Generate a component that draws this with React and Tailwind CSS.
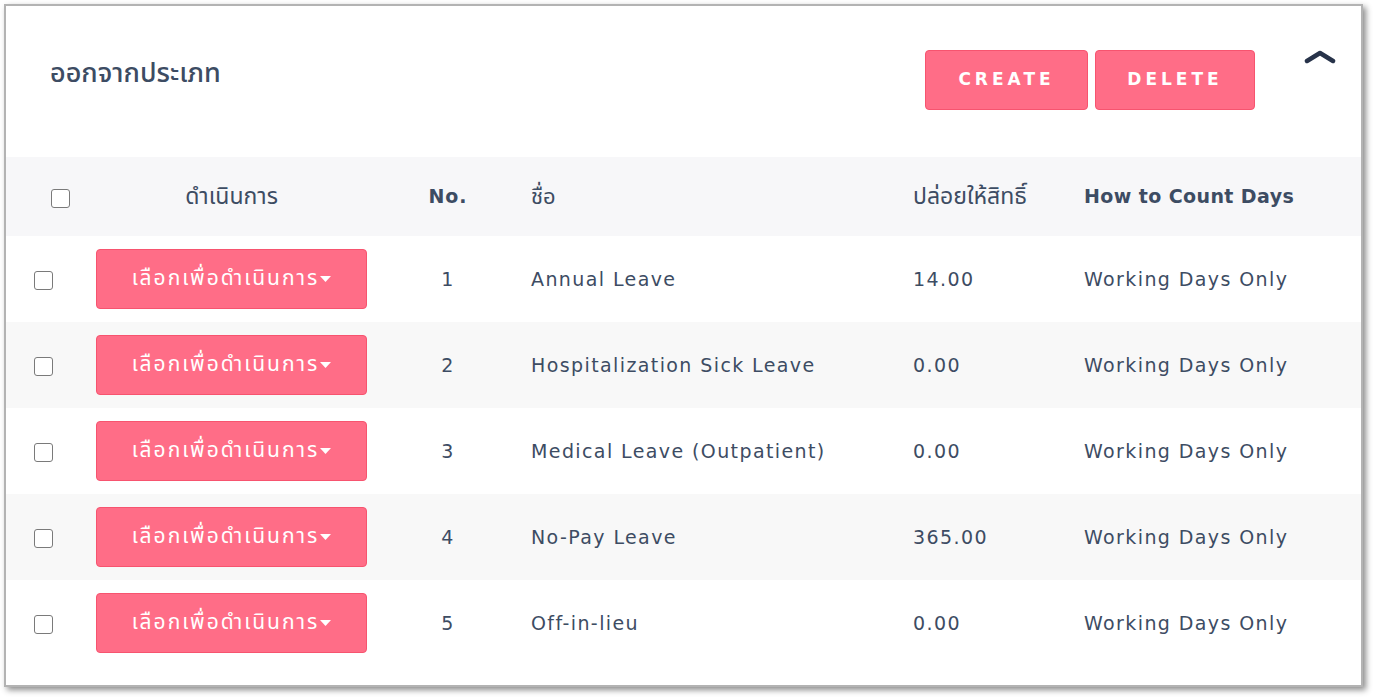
import React from "react";

const rows = [
  { no: 1, name: "Annual Leave", days: "14.00" },
  { no: 2, name: "Hospitalization Sick Leave", days: "0.00" },
  { no: 3, name: "Medical Leave (Outpatient)", days: "0.00" },
  { no: 4, name: "No-Pay Leave", days: "365.00" },
  { no: 5, name: "Off-in-lieu", days: "0.00" },
];

const font = { fontFamily: '"DejaVu Sans", "Noto Sans Thai", "Noto Sans", sans-serif' };

function Checkbox() {
  return <span className="block w-[19px] h-[19px] rounded-[3px] border-[1.5px] border-[#7a7a7a] bg-white" />;
}

export default function App() {
  return (
    <div className="min-h-screen bg-white pt-[4px] pl-[4px]" style={font}>
      <div className="w-[1359px] h-[683px] border-2 border-[#b3b3b3] bg-white shadow-[3px_3px_6px_rgba(0,0,0,0.45)] text-[#3d4c63]">
        {/* Header */}
        <div className="flex items-start h-[151px]">
          <h1 className="ml-[44px] mt-[50px] text-[27px] leading-[34px] font-medium">ออกจากประเภท</h1>
          <div className="ml-auto mt-[44px] flex gap-[7px]">
            <button className="w-[163px] h-[60px] rounded-[4px] bg-[#ff6d87] border border-[#f7546f] text-white text-[17px] font-bold tracking-[4px]">
              CREATE
            </button>
            <button className="w-[160px] h-[60px] rounded-[4px] bg-[#ff6d87] border border-[#f7546f] text-white text-[17px] font-bold tracking-[4px]">
              DELETE
            </button>
          </div>
          <svg className="ml-[49px] mt-[43px] mr-[25px]" width="32" height="16" viewBox="0 0 32 16">
            <path d="M3 12 L16 4 L29 12" fill="none" stroke="#27334a" strokeWidth="4.5" strokeLinecap="round" strokeLinejoin="round" />
          </svg>
        </div>

        {/* Table header */}
        <div className="grid grid-cols-[90px_285px_134px_382px_171px_1fr] items-center h-[79px] bg-[#f7f7f9] text-[19px]">
          <div className="pl-[45px] pt-[3px]">
            <Checkbox />
          </div>
          <div className="w-[271px] text-center text-[23px]">ดำเนินการ</div>
          <div className="text-center font-bold tracking-[1px]">No.</div>
          <div className="pl-4 text-[22px]">ชื่อ</div>
          <div className="pl-4 text-[23px]">ปล่อยให้สิทธิ์</div>
          <div className="pl-4 font-bold tracking-[0.4px]">How to Count Days</div>
        </div>

        {/* Rows */}
        {rows.map((r, i) => (
          <div
            key={r.no}
            className={`grid grid-cols-[90px_285px_134px_382px_171px_1fr] items-center h-[86px] text-[19px] tracking-[1.4px] ${
              i % 2 === 1 ? "bg-[#f8f8f8]" : "bg-white"
            }`}
          >
            <div className="pl-[28px] pt-[2px]">
              <Checkbox />
            </div>
            <div>
              <button className="w-[271px] h-[60px] rounded-[4px] bg-[#ff6d87] border border-[#f7546f] text-white text-[21px] tracking-[2px] flex items-center justify-center">
                เลือกเพื่อดำเนินการ
                <svg className="ml-[1px]" width="11" height="6" viewBox="0 0 11 6">
                  <path d="M0 0 L11 0 L5.5 6 Z" fill="white" />
                </svg>
              </button>
            </div>
            <div className="text-center">{r.no}</div>
            <div className="pl-4">{r.name}</div>
            <div className="pl-4">{r.days}</div>
            <div className="pl-4">Working Days Only</div>
          </div>
        ))}
      </div>
    </div>
  );
}
